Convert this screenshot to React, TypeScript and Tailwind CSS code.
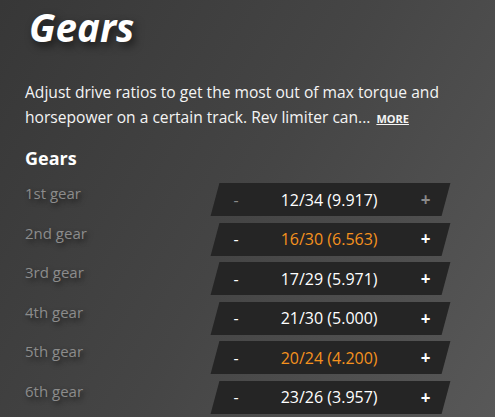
import React from "react";

const gears = [
  { label: "1st gear", value: "12/34 (9.917)", orange: false, disabled: true },
  { label: "2nd gear", value: "16/30 (6.563)", orange: true, disabled: false },
  { label: "3rd gear", value: "17/29 (5.971)", orange: false, disabled: false },
  { label: "4th gear", value: "21/30 (5.000)", orange: false, disabled: false },
  { label: "5th gear", value: "20/24 (4.200)", orange: true, disabled: false },
  { label: "6th gear", value: "23/26 (3.957)", orange: false, disabled: false },
];

export default function App() {
  return (
    <div
      className="w-[495px] h-[417px] overflow-hidden pl-[25px] text-white bg-[linear-gradient(120deg,#373737_0%,#454545_50%,#585858_100%)]"
      style={{ fontFamily: '"Open Sans", "DejaVu Sans", sans-serif' }}
    >
      <h1 className="pt-[8px] pl-[4px] text-[38.5px] leading-[38px] font-bold italic [text-shadow:3px_4px_8px_rgba(0,0,0,0.6)]">
        Gears
      </h1>
      <p className="mt-[34px] text-[15.6px] leading-[25px] text-[#f4f4f4] pr-[30px]">
        Adjust drive ratios to get the most out of max torque and horsepower on a certain track. Rev limiter can...
        <span className="ml-[6px] text-[11px] font-bold underline">MORE</span>
      </p>
      <h2 className="mt-[15px] text-[18px] leading-[24px] font-bold">Gears</h2>
      <div className="mt-[13px] flex flex-col gap-[6.6px]">
        {gears.map((g) => (
          <div key={g.label} className="flex items-start h-[33px]">
            <div className="w-[189.5px] text-[15px] leading-[20px] text-[#8c8c8c] [text-shadow:2px_3px_5px_rgba(0,0,0,0.55)]">
              {g.label}
            </div>
            <div className="relative w-[231px] h-[33px]">
              <div className="absolute inset-0 bg-[#252525] skew-x-[-15deg]" />
              <div className="relative flex items-center h-full pl-[19px] pr-[15px] text-[16px]">
                <span className={g.disabled ? "text-[#8a8a8a] w-[12px]" : "text-white w-[12px]"}>-</span>
                <span className={"flex-1 text-center pr-[8px] " + (g.orange ? "text-[#f5921e]" : "text-white")}>
                  {g.value}
                </span>
                <span className={g.disabled ? "text-[#8a8a8a] text-[17px] font-bold" : "text-white text-[17px] font-bold"}>+</span>
              </div>
            </div>
          </div>
        ))}
      </div>
    </div>
  );
}
